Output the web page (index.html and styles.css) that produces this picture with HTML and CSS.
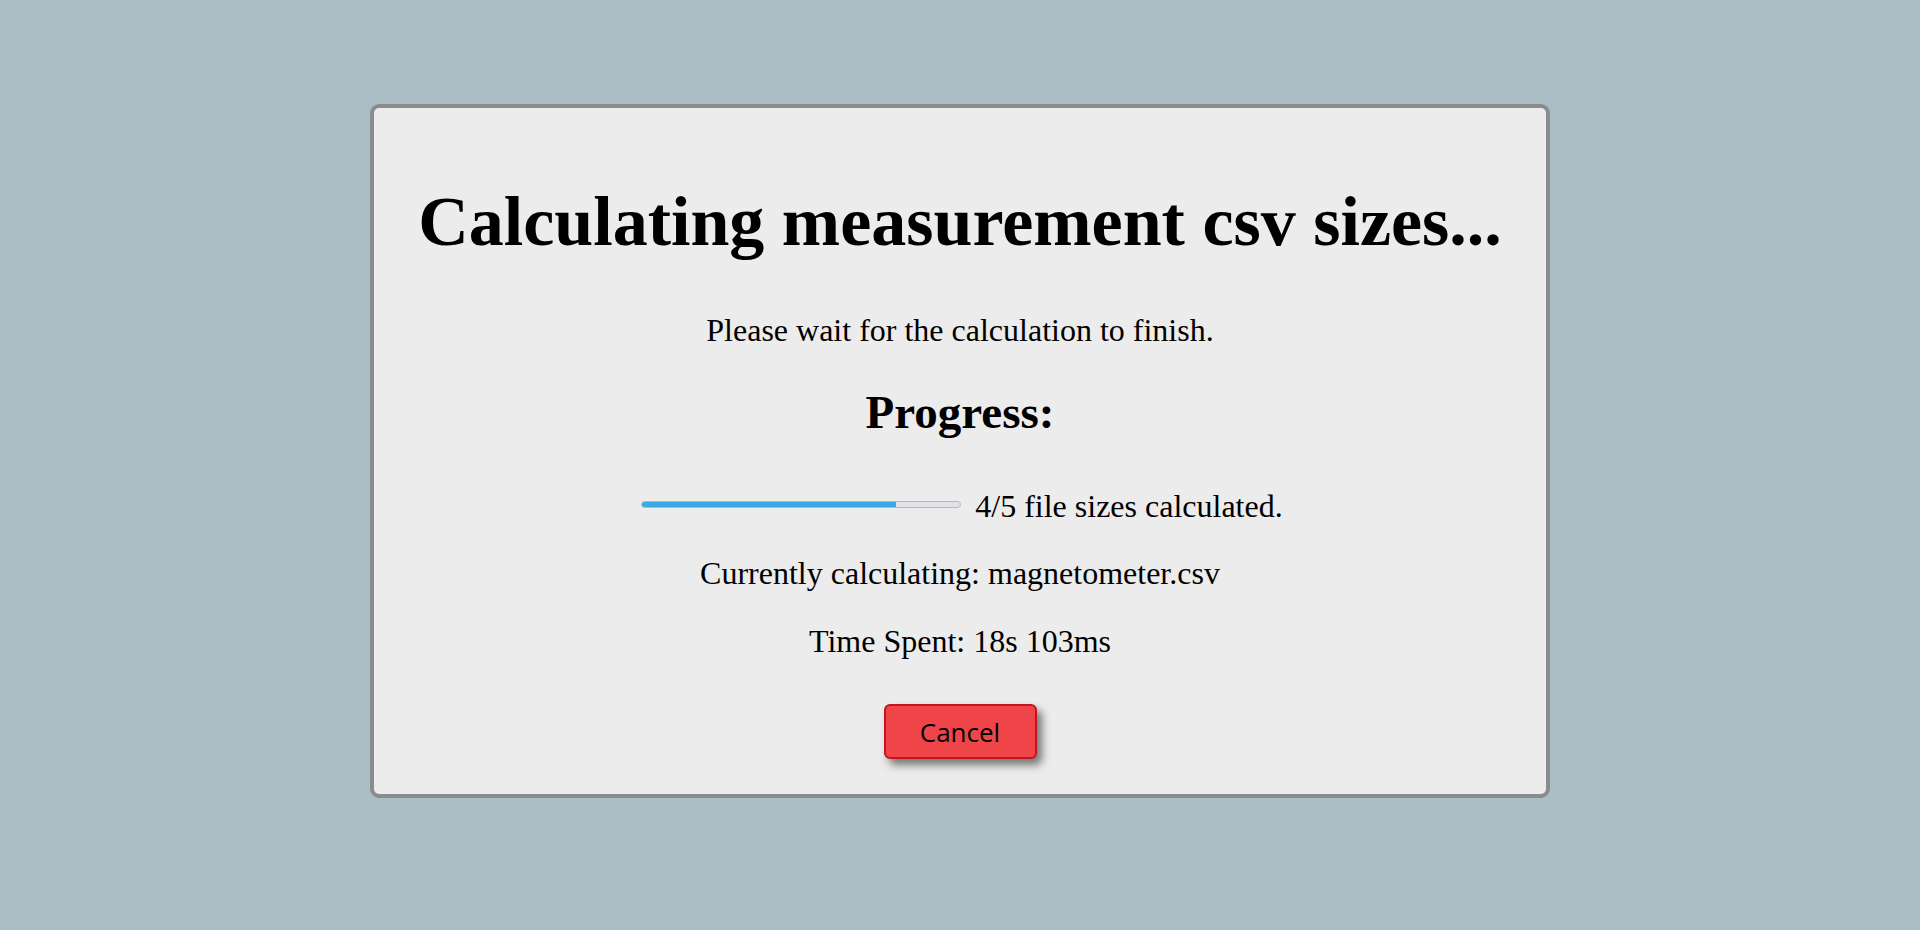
FILE: index.html
```html
<!DOCTYPE html>
<html lang="en">
<head>
<meta charset="utf-8">
<title>Calculating measurement csv sizes</title>
<link rel="stylesheet" href="styles.css">
</head>
<body>
<main class="page">
  <section class="dialog">
    <h1 class="title">Calculating measurement csv sizes...</h1>
    <p class="note">Please wait for the calculation to finish.</p>
    <h2 class="subtitle">Progress:</h2>
    <div class="progress-row">
      <div class="bar"><div class="bar-fill" style="width: 80%"></div></div>
      <span class="progress-text">4/5 file sizes calculated.</span>
    </div>
    <p class="current">Currently calculating: magnetometer.csv</p>
    <p class="time">Time Spent: 18s 103ms</p>
    <button class="cancel" type="button">Cancel</button>
  </section>
</main>
</body>
</html>
```

FILE: styles.css
```css
html, body {
  margin: 0;
  padding: 0;
}
body {
  background: #abbec5;
  font-family: "Liberation Serif", "Times New Roman", serif;
  color: #000;
  height: 930px;
}
.page {
  display: flex;
  justify-content: center;
  padding-top: 104px;
}
.dialog {
  box-sizing: border-box;
  width: 1180px;
  height: 694px;
  background: #ececec;
  border: 4px solid #8c8c8c;
  border-radius: 9px;
  display: flex;
  flex-direction: column;
  align-items: center;
  padding-top: 74px;
}
.title {
  margin: 0;
  font-size: 70px;
  line-height: 80px;
  font-weight: bold;
  white-space: nowrap;
}
.note {
  margin: 48px 0 0;
  font-size: 32px;
  line-height: 40px;
}
.subtitle {
  margin: 34px 0 0;
  font-size: 47px;
  line-height: 56px;
  font-weight: bold;
}
.progress-row {
  margin-top: 46px;
  display: flex;
  align-items: center;
  gap: 14px;
  height: 40px;
  padding-left: 4px;
}
.bar {
  box-sizing: border-box;
  width: 320px;
  height: 7px;
  margin-bottom: 3px;
  background: #e2e2e8;
  border: 1px solid #b6b6be;
  border-radius: 4px;
  overflow: hidden;
  display: flex;
}
.bar-fill {
  background: #3aa9e4;
  border-radius: 4px 0 0 4px;
  margin: -1px 0 -1px -1px;
}
.progress-text {
  font-size: 32px;
  line-height: 40px;
}
.current {
  margin: 27px 0 0;
  font-size: 32px;
  line-height: 40px;
}
.time {
  margin: 28px 0 0;
  font-size: 32px;
  line-height: 40px;
}
.cancel {
  margin-top: 43px;
  box-sizing: border-box;
  width: 153px;
  height: 55px;
  padding: 0;
  background: #ef4549;
  border: 2px solid #c2151d;
  border-radius: 6px;
  box-shadow: 5px 6px 8px rgba(0, 0, 0, 0.5);
  font-family: "Open Sans", "Noto Sans", sans-serif;
  font-size: 26px;
  color: #000;
  cursor: pointer;
}
```
